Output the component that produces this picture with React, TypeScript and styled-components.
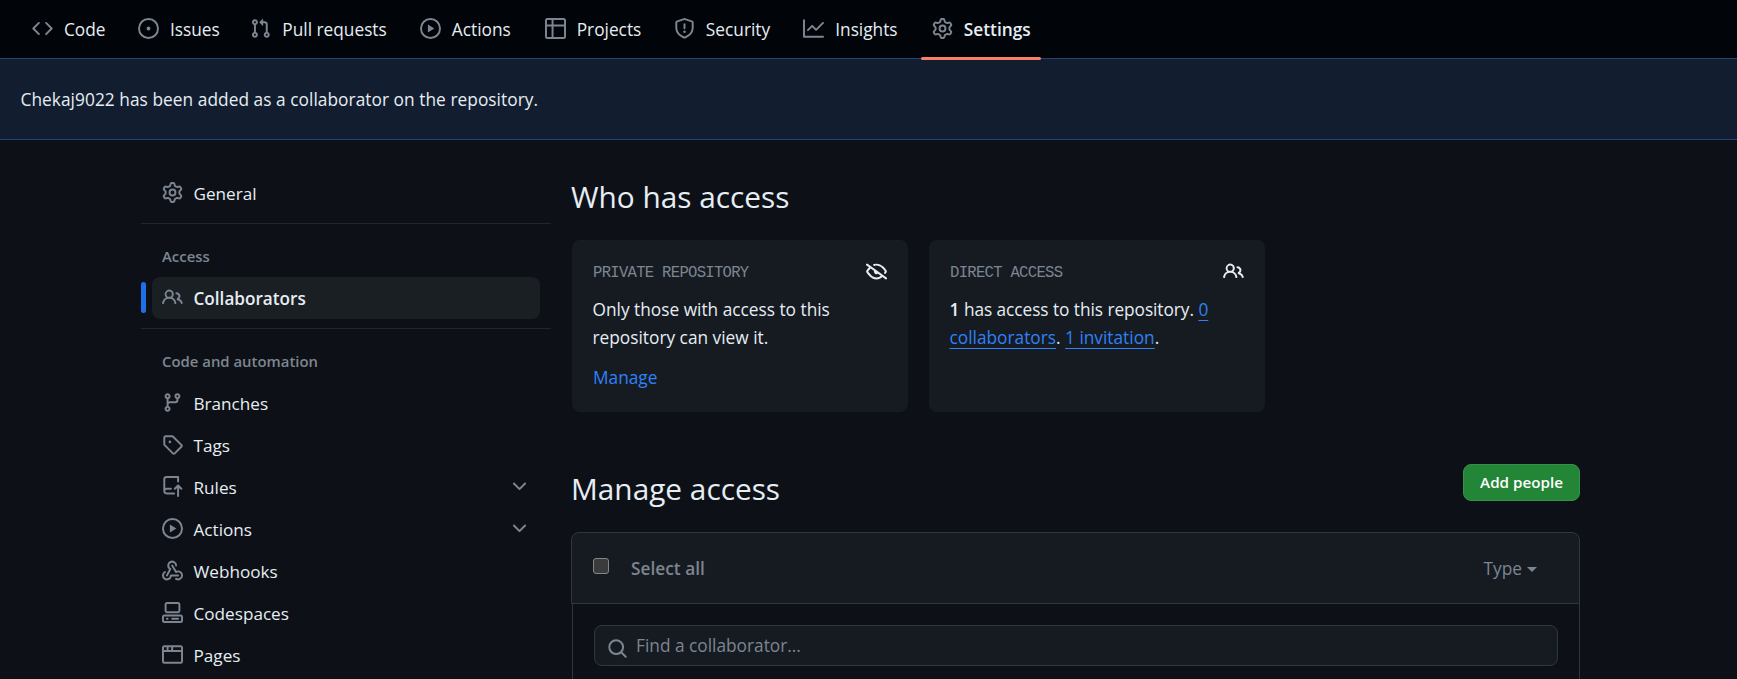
import React from "react";
import styled, { createGlobalStyle } from "styled-components";

const sans = `"Open Sans", "Noto Sans", sans-serif`;

const GlobalStyle = createGlobalStyle`
  *, *::before, *::after { box-sizing: border-box; }
  html, body { margin: 0; background: #0d1117; }
  body {
    color: #e6edf3;
    font-family: ${sans};
    font-size: 17.3px;
    height: 679px;
    overflow: hidden;
  }
  h2, p { margin: 0; font-weight: 400; }
`;

const icons = {
  code: "m11.28 3.22 4.25 4.25a.75.75 0 0 1 0 1.06l-4.25 4.25a.749.749 0 0 1-1.275-.326.749.749 0 0 1 .215-.734L13.94 8l-3.72-3.72a.749.749 0 0 1 .326-1.275.749.749 0 0 1 .734.215Zm-6.56 0a.751.751 0 0 1 1.042.018.751.751 0 0 1 .018 1.042L2.06 8l3.72 3.72a.749.749 0 0 1-.326 1.275.749.749 0 0 1-.734-.215L.47 8.53a.75.75 0 0 1 0-1.06Z",
  issue: "M8 9.5a1.5 1.5 0 1 0 0-3 1.5 1.5 0 0 0 0 3ZM8 0a8 8 0 1 1 0 16A8 8 0 0 1 8 0ZM1.5 8a6.5 6.5 0 1 0 13 0 6.5 6.5 0 0 0-13 0Z",
  pull: "M1.5 3.25a2.25 2.25 0 1 1 3 2.122v5.256a2.251 2.251 0 1 1-1.5 0V5.372A2.25 2.25 0 0 1 1.5 3.25Zm5.677-.177L9.573.677A.25.25 0 0 1 10 .854V2.5h1A2.5 2.5 0 0 1 13.5 5v5.628a2.251 2.251 0 1 1-1.5 0V5a1 1 0 0 0-1-1h-1v1.646a.25.25 0 0 1-.427.177L7.177 3.427a.25.25 0 0 1 0-.354ZM3.75 2.5a.75.75 0 1 0 0 1.5.75.75 0 0 0 0-1.5Zm0 9.5a.75.75 0 1 0 0 1.5.75.75 0 0 0 0-1.5Zm8.25.75a.75.75 0 1 0 1.5 0 .75.75 0 0 0-1.5 0Z",
  play: "M8 0a8 8 0 1 1 0 16A8 8 0 0 1 8 0ZM1.5 8a6.5 6.5 0 1 0 13 0 6.5 6.5 0 0 0-13 0Zm4.879-2.773 4.264 2.559a.25.25 0 0 1 0 .428l-4.264 2.559A.25.25 0 0 1 6 10.559V5.442a.25.25 0 0 1 .379-.215Z",
  table: "M0 1.75C0 .784.784 0 1.75 0h12.5C15.216 0 16 .784 16 1.75v12.5A1.75 1.75 0 0 1 14.25 16H1.75A1.75 1.75 0 0 1 0 14.25ZM6.5 6.5v8h7.75a.25.25 0 0 0 .25-.25V6.5Zm8-1.5V1.75a.25.25 0 0 0-.25-.25H6.5V5Zm-13 1.5v7.75c0 .138.112.25.25.25H5v-8ZM5 5V1.5H1.75a.25.25 0 0 0-.25.25V5Z",
  shield: "M7.467.133a1.748 1.748 0 0 1 1.066 0l5.25 1.68A1.75 1.75 0 0 1 15 3.48V7c0 1.566-.32 3.182-1.303 4.682-.983 1.498-2.585 2.813-5.032 3.855a1.697 1.697 0 0 1-1.33 0c-2.447-1.042-4.049-2.357-5.032-3.855C1.32 10.182 1 8.566 1 7V3.48a1.755 1.755 0 0 1 1.217-1.667Zm.61 1.429a.25.25 0 0 0-.153 0l-5.25 1.68a.25.25 0 0 0-.174.238V7c0 1.358.275 2.666 1.057 3.86.784 1.194 2.121 2.34 4.366 3.297a.196.196 0 0 0 .154 0c2.245-.956 3.582-2.104 4.366-3.298C13.225 9.666 13.5 8.36 13.5 7V3.48a.251.251 0 0 0-.174-.237l-5.25-1.68ZM8.75 4.75v3a.75.75 0 0 1-1.5 0v-3a.75.75 0 0 1 1.5 0ZM9 10.5a1 1 0 1 1-2 0 1 1 0 0 1 2 0Z",
  graph: "M1.5 1.75V13.5h13.75a.75.75 0 0 1 0 1.5H.75a.75.75 0 0 1-.75-.75V1.75a.75.75 0 0 1 1.5 0Zm14.28 2.53-5.25 5.25a.75.75 0 0 1-1.06 0L7 7.06 4.28 9.78a.751.751 0 0 1-1.042-.018.751.751 0 0 1-.018-1.042l3.25-3.25a.75.75 0 0 1 1.06 0L10 7.94l4.72-4.72a.751.751 0 0 1 1.042.018.751.751 0 0 1 .018 1.042Z",
  gear: "M8 0a8.2 8.2 0 0 1 .701.031C9.444.095 9.99.645 10.16 1.29l.288 1.107c.018.066.079.158.212.224.231.114.454.243.668.386.123.082.233.09.299.071l1.103-.303c.644-.176 1.392.021 1.82.63.27.385.506.792.704 1.218.315.675.111 1.422-.364 1.891l-.814.806c-.049.048-.098.147-.088.294.016.257.016.515 0 .772-.01.147.038.246.088.294l.814.806c.475.469.679 1.216.364 1.891a7.977 7.977 0 0 1-.704 1.217c-.428.61-1.176.807-1.82.63l-1.102-.302c-.067-.019-.177-.011-.3.071a5.909 5.909 0 0 1-.668.386c-.133.066-.194.158-.211.224l-.29 1.106c-.168.646-.715 1.196-1.458 1.26a8.006 8.006 0 0 1-1.402 0c-.743-.064-1.289-.614-1.458-1.26l-.289-1.106c-.018-.066-.079-.158-.212-.224a5.738 5.738 0 0 1-.668-.386c-.123-.082-.233-.09-.299-.071l-1.103.303c-.644.176-1.392-.021-1.82-.63a8.12 8.12 0 0 1-.704-1.218c-.315-.675-.111-1.422.363-1.891l.815-.806c.05-.048.098-.147.088-.294a6.214 6.214 0 0 1 0-.772c.01-.147-.038-.246-.088-.294l-.815-.806C.635 6.045.431 5.298.746 4.623a7.92 7.92 0 0 1 .704-1.217c.428-.61 1.176-.807 1.82-.63l1.102.302c.067.019.177.011.3-.071.214-.143.437-.272.668-.386.133-.066.194-.158.211-.224l.29-1.106C6.009.645 6.556.095 7.299.03 7.53.01 7.764 0 8 0Zm-.571 1.525c-.036.003-.108.036-.137.146l-.289 1.105c-.147.561-.549.967-.998 1.189-.173.086-.34.183-.5.29-.417.278-.97.423-1.529.27l-1.103-.303c-.109-.03-.175.016-.195.045-.22.312-.412.644-.573.99-.014.031-.021.11.059.19l.815.806c.411.406.562.957.53 1.456a4.709 4.709 0 0 0 0 .582c.032.499-.119 1.05-.53 1.456l-.815.806c-.081.08-.073.159-.059.19.162.346.353.677.573.989.02.03.085.076.195.046l1.102-.303c.56-.153 1.113-.008 1.53.27.161.107.328.204.501.29.447.222.85.629.997 1.189l.289 1.105c.029.109.101.143.137.146a6.6 6.6 0 0 0 1.142 0c.036-.003.108-.036.137-.146l.289-1.105c.147-.561.549-.967.998-1.189.173-.086.34-.183.5-.29.417-.278.97-.423 1.529-.27l1.103.303c.109.029.175-.016.195-.045.22-.313.411-.644.573-.99.014-.031.021-.11-.059-.19l-.815-.806c-.411-.406-.562-.957-.53-1.456a4.709 4.709 0 0 0 0-.582c-.032-.499.119-1.05.53-1.456l.815-.806c.081-.08.073-.159.059-.19a6.464 6.464 0 0 0-.573-.989c-.02-.03-.085-.076-.195-.046l-1.102.303c-.56.153-1.113.008-1.53-.27a4.44 4.44 0 0 0-.501-.29c-.447-.222-.85-.629-.997-1.189l-.289-1.105c-.029-.11-.101-.143-.137-.146a6.6 6.6 0 0 0-1.142 0ZM11 8a3 3 0 1 1-6 0 3 3 0 0 1 6 0ZM9.5 8a1.5 1.5 0 1 0-3.001.001A1.5 1.5 0 0 0 9.5 8Z",
  people: "M2 5.5a3.5 3.5 0 1 1 5.898 2.549 5.508 5.508 0 0 1 3.034 4.084.75.75 0 1 1-1.482.235 4 4 0 0 0-7.9 0 .75.75 0 0 1-1.482-.236A5.507 5.507 0 0 1 3.102 8.05 3.493 3.493 0 0 1 2 5.5ZM11 4a3.001 3.001 0 0 1 2.22 5.018 5.01 5.01 0 0 1 2.56 3.012.749.749 0 0 1-.885.954.752.752 0 0 1-.549-.514 3.507 3.507 0 0 0-2.522-2.372.75.75 0 0 1-.574-.73v-.352a.75.75 0 0 1 .416-.672A1.5 1.5 0 0 0 11 5.5.75.75 0 0 1 11 4Zm-5.5-.5a2 2 0 1 0-.001 3.999A2 2 0 0 0 5.5 3.5Z",
  branch: "M9.5 3.25a2.25 2.25 0 1 1 3 2.122V6A2.5 2.5 0 0 1 10 8.5H6a1 1 0 0 0-1 1v1.128a2.251 2.251 0 1 1-1.5 0V5.372a2.25 2.25 0 1 1 1.5 0v1.836A2.493 2.493 0 0 1 6 7h4a1 1 0 0 0 1-1v-.628A2.25 2.25 0 0 1 9.5 3.25Zm-6 0a.75.75 0 1 0 1.5 0 .75.75 0 0 0-1.5 0Zm8.25-.75a.75.75 0 1 0 0 1.5.75.75 0 0 0 0-1.5ZM4.25 12a.75.75 0 1 0 0 1.5.75.75 0 0 0 0-1.5Z",
  tag: "M1 7.775V2.75C1 1.784 1.784 1 2.75 1h5.025c.464 0 .91.184 1.238.513l6.25 6.25a1.75 1.75 0 0 1 0 2.474l-5.026 5.026a1.75 1.75 0 0 1-2.474 0l-6.25-6.25A1.752 1.752 0 0 1 1 7.775Zm1.5 0c0 .066.026.13.073.177l6.25 6.25a.25.25 0 0 0 .354 0l5.025-5.025a.25.25 0 0 0 0-.354l-6.25-6.25a.25.25 0 0 0-.177-.073H2.75a.25.25 0 0 0-.25.25ZM6 5a1 1 0 1 1 0 2 1 1 0 0 1 0-2Z",
  push: "M1 2.5A2.5 2.5 0 0 1 3.5 0h8.75a.75.75 0 0 1 .75.75v3.5a.75.75 0 0 1-1.5 0V1.5h-8a1 1 0 0 0-1 1v6.708A2.493 2.493 0 0 1 3.5 9h3.25a.75.75 0 0 1 0 1.5H3.5a1 1 0 0 0 0 2h5.75a.75.75 0 0 1 0 1.5H3.5A2.5 2.5 0 0 1 1 11.5Zm13.23 7.79h-.001l-1.224-1.224v6.184a.75.75 0 0 1-1.5 0V9.066L10.28 10.29a.75.75 0 0 1-1.06-1.061l2.505-2.504a.75.75 0 0 1 1.06 0L15.29 9.23a.751.751 0 0 1-.018 1.042.751.751 0 0 1-1.042.018Z",
  webhook: "M5.5 4.25a2.25 2.25 0 0 1 4.5 0 .75.75 0 0 0 1.5 0 3.75 3.75 0 1 0-6.14 2.889l-2.272 4.258a.75.75 0 0 0 1.324.706L7 7.25a.75.75 0 0 0-.309-1.015A2.25 2.25 0 0 1 5.5 4.25Z|M7.364 3.607a.75.75 0 0 1 1.03.257l2.608 4.349a3.75 3.75 0 1 1-.628 6.785.75.75 0 0 1 .752-1.299 2.25 2.25 0 1 0-.033-3.88.75.75 0 0 1-1.03-.256L7.107 4.636a.75.75 0 0 1 .257-1.03Z|M2.9 8.776A.75.75 0 0 1 2.625 9.8 2.25 2.25 0 1 0 6 11.75a.75.75 0 0 1 .75-.751h5.5a.75.75 0 0 1 0 1.5H7.425a3.751 3.751 0 1 1-5.55-3.998.75.75 0 0 1 1.024.274Z",
  codespaces: "M0 11.25c0-.966.784-1.75 1.75-1.75h12.5c.966 0 1.75.784 1.75 1.75v3A1.75 1.75 0 0 1 14.25 16H1.75A1.75 1.75 0 0 1 0 14.25Zm2-9.5C2 .784 2.784 0 3.75 0h8.5C13.216 0 14 .784 14 1.75v5a1.75 1.75 0 0 1-1.75 1.75h-8.5A1.75 1.75 0 0 1 2 6.75Zm1.75-.25a.25.25 0 0 0-.25.25v5c0 .138.112.25.25.25h8.5a.25.25 0 0 0 .25-.25v-5a.25.25 0 0 0-.25-.25Zm-2 9.5a.25.25 0 0 0-.25.25v3c0 .138.112.25.25.25h12.5a.25.25 0 0 0 .25-.25v-3a.25.25 0 0 0-.25-.25Z|M7 12.75a.75.75 0 0 1 .75-.75h4.5a.75.75 0 0 1 0 1.5h-4.5a.75.75 0 0 1-.75-.75Zm-4 0a.75.75 0 0 1 .75-.75h.5a.75.75 0 0 1 0 1.5h-.5a.75.75 0 0 1-.75-.75Z",
  browser: "M0 2.75C0 1.784.784 1 1.75 1h12.5c.966 0 1.75.784 1.75 1.75v10.5A1.75 1.75 0 0 1 14.25 15H1.75A1.75 1.75 0 0 1 0 13.25ZM14.5 6h-13v7.25c0 .138.112.25.25.25h12.5a.25.25 0 0 0 .25-.25Zm-6-3.5v2h6V2.75a.25.25 0 0 0-.25-.25ZM5 2.5v2h2v-2Zm-3.25 0a.25.25 0 0 0-.25.25V4.5h2v-2Z",
  chevron: "M12.78 5.22a.749.749 0 0 1 0 1.06l-4.25 4.25a.749.749 0 0 1-1.06 0L3.22 6.28a.749.749 0 1 1 1.06-1.06L8 8.939l3.72-3.719a.749.749 0 0 1 1.06 0Z",
  eyeClosed: "M.143 2.31a.75.75 0 0 1 1.047-.167l14.5 10.5a.75.75 0 1 1-.88 1.214l-2.248-1.628C11.346 13.19 9.792 14 8 14c-1.981 0-3.67-.992-4.933-2.078C1.797 10.832.88 9.577.43 8.9a1.619 1.619 0 0 1 0-1.797c.353-.533.995-1.42 1.868-2.305L.31 3.357A.75.75 0 0 1 .143 2.31Zm1.536 5.622A.12.12 0 0 0 1.657 8c0 .021.006.045.022.068.412.621 1.242 1.75 2.366 2.717C5.175 11.758 6.527 12.5 8 12.5c1.195 0 2.31-.488 3.29-1.191L9.063 9.695A2 2 0 0 1 6.058 7.52L3.529 5.688a14.207 14.207 0 0 0-1.85 2.244ZM8 3.5c-.516 0-1.017.09-1.499.251a.75.75 0 1 1-.473-1.423A6.207 6.207 0 0 1 8 2c1.981 0 3.67.992 4.933 2.078 1.27 1.091 2.187 2.345 2.637 3.023a1.62 1.62 0 0 1 0 1.798c-.11.166-.248.365-.41.587a.75.75 0 1 1-1.21-.887c.148-.201.272-.382.371-.53a.119.119 0 0 0 0-.137c-.412-.621-1.242-1.75-2.366-2.717C10.825 4.242 9.473 3.5 8 3.5Z",
  search: "M10.68 11.74a6 6 0 0 1-7.922-8.982 6 6 0 0 1 8.982 7.922l3.04 3.04a.749.749 0 0 1-.326 1.275.749.749 0 0 1-.734-.215ZM11.5 7a4.499 4.499 0 1 0-8.997 0A4.499 4.499 0 0 0 11.5 7Z",
};

type IconName = keyof typeof icons;

const Svg = styled.svg<{ $bright?: boolean }>`
  display: block;
  flex: none;
  width: 21px;
  height: 21px;
  fill: ${(p) => (p.$bright ? "#e6edf3" : "#7d8590")};
`;

const Icon = ({ name, bright }: { name: IconName; bright?: boolean }) => (
  <Svg viewBox="0 0 16 16" $bright={bright} aria-hidden="true">
    {icons[name].split("|").map((d) => (
      <path key={d} d={d} />
    ))}
  </Svg>
);

const RepoNav = styled.nav`
  display: flex;
  gap: 10.4px;
  height: 58px;
  padding-left: 21.4px;
  background: #010409;
`;

const NavTab = styled.a<{ $active?: boolean }>`
  position: relative;
  display: flex;
  align-items: center;
  gap: 11.2px;
  height: 57px;
  padding: 0 9.4px 0 10.4px;
  font-weight: ${(p) => (p.$active ? 600 : 400)};
  white-space: nowrap;

  &::after {
    content: "";
    display: ${(p) => (p.$active ? "block" : "none")};
    position: absolute;
    left: 0;
    right: 0;
    top: 57px;
    height: 3px;
    border-radius: 2px;
    background: #f78166;
  }
`;

const TabLabel = styled.span<{ $width: number }>`
  width: ${(p) => p.$width}px;
  padding-top: 1px;
`;

const Flash = styled.div`
  display: flex;
  align-items: center;
  height: 82px;
  padding: 1px 20.5px 0;
  border-top: 1px solid #1e4479;
  border-bottom: 1px solid #1e4479;
  background: #121d2f;
  letter-spacing: 0.05px;
`;

const Page = styled.div`
  display: grid;
  grid-template-columns: 410px 1008px;
  column-gap: 21px;
  padding: 32px 0 0 141px;
`;

const Divider = styled.div`
  height: 1px;
  margin-top: 9px;
  background: #21262d;
`;

const GroupTitle = styled.div`
  height: 53px;
  padding: 11.6px 21px 0;
  line-height: 41.4px;
  font-size: 14.9px;
  font-weight: 600;
  color: #7d8590;
`;

const SideItem = styled.a<{ $active?: boolean }>`
  position: relative;
  display: flex;
  align-items: center;
  gap: 10.5px;
  height: 42px;
  margin: 0 11px;
  padding: 0 10px;
  border-radius: 8px;
  background: ${(p) => (p.$active ? "#1a1f24" : "transparent")};
  font-weight: ${(p) => (p.$active ? 600 : 400)};

  svg { margin-bottom: 1px; }

  &::before {
    content: "";
    display: ${(p) => (p.$active ? "block" : "none")};
    position: absolute;
    left: -11px;
    top: 5px;
    width: 5px;
    height: 31px;
    border-radius: 3px;
    background: #1f6feb;
  }
`;

const SideLabel = styled.span`
  flex: 1;
  padding-top: 1px;
  font-size: 17.15px;
`;

const Heading = styled.h2`
  height: 48px;
  margin-left: -1px;
  padding-top: 1px;
  line-height: 48px;
  font-size: 29.8px;
`;

const Cards = styled.div`
  display: flex;
  gap: 21px;
  margin-top: 20px;
`;

const Card = styled.section`
  width: 336px;
  height: 172px;
  padding: 21px;
  border-radius: 8px;
  background: #161b22;
`;

const CardHead = styled.header`
  display: flex;
  justify-content: space-between;
  height: 21px;
  margin-bottom: 14px;
`;

const CardLabel = styled.span`
  padding-top: 2px;
  font: 15.6px/21px "Liberation Mono", monospace;
  letter-spacing: -0.72px;
  color: #7d8590;
`;

const CardText = styled.p`
  margin-left: -0.5px;
  line-height: 28.3px;
`;

const Strong = styled.strong`
  font-weight: 600;
`;

const Compact = styled.span`
  letter-spacing: -0.06px;
`;

const Link = styled.a<{ $underlined?: boolean }>`
  color: #2f81f7;
  text-decoration: ${(p) => (p.$underlined ? "underline" : "none")};
  text-decoration-thickness: 1px;
  text-underline-offset: 4px;
  text-decoration-skip-ink: none;
`;

const ManageLine = styled.p`
  margin-top: 11.5px;
  line-height: 28.3px;
`;

const ManageHead = styled.div`
  display: flex;
  justify-content: space-between;
  align-items: flex-start;
  height: 49px;
  margin: 52px 0 19px;
`;

const AddButton = styled.button`
  width: 117px;
  height: 37px;
  padding: 0 0 2px;
  border: 1px solid #379249;
  border-radius: 8px;
  background: #238636;
  color: #fff;
  font: 600 15.2px ${sans};
`;

const ListHead = styled.div`
  display: flex;
  align-items: center;
  height: 72px;
  margin-left: -1px;
  padding: 0 42px 0 21px;
  border: 1px solid #30363d;
  border-radius: 8px 8px 0 0;
  background: #161b22;
  color: #7d8590;
`;

const Checkbox = styled.span`
  width: 16px;
  height: 16px;
  margin: 0 22px 4px 0;
  border: 1px solid #858585;
  border-radius: 3px;
  background: #3b3b3b;
`;

const SelectAll = styled.span`
  flex: 1;
  font-weight: 600;
`;

const TypeMenu = styled.span`
  display: flex;
  align-items: center;
  gap: 5px;

  &::after {
    content: "";
    margin-top: 3px;
    border: 5px solid transparent;
    border-top-color: #7d8590;
    border-bottom: 0;
  }
`;

const ListBody = styled.div`
  height: 75px;
  padding: 21px 21px 0;
  border: solid #30363d;
  border-width: 0 1px;
`;

const SearchField = styled.div`
  display: flex;
  align-items: center;
  gap: 8px;
  height: 41px;
  padding: 0 12px;
  border: 1px solid #30363d;
  border-radius: 8px;
  background: #161b22;
  color: #7d8590;

  svg { margin-top: 5px; }
`;

const tabs: { icon: IconName; label: string; width: number; active?: boolean }[] = [
  { icon: "code", label: "Code", width: 43.6 },
  { icon: "issue", label: "Issues", width: 50 },
  { icon: "pull", label: "Pull requests", width: 107.2 },
  { icon: "play", label: "Actions", width: 62.5 },
  { icon: "table", label: "Projects", width: 66.8 },
  { icon: "shield", label: "Security", width: 67 },
  { icon: "graph", label: "Insights", width: 66.2 },
  { icon: "gear", label: "Settings", width: 68, active: true },
];

const automation: { icon: IconName; label: string; expandable?: boolean }[] = [
  { icon: "branch", label: "Branches" },
  { icon: "tag", label: "Tags" },
  { icon: "push", label: "Rules", expandable: true },
  { icon: "play", label: "Actions", expandable: true },
  { icon: "webhook", label: "Webhooks" },
  { icon: "codespaces", label: "Codespaces" },
  { icon: "browser", label: "Pages" },
];

export default function App() {
  return (
    <>
      <GlobalStyle />
      <RepoNav>
        {tabs.map((t) => (
          <NavTab key={t.label} $active={t.active}>
            <Icon name={t.icon} />
            <TabLabel $width={t.width}>{t.label}</TabLabel>
          </NavTab>
        ))}
      </RepoNav>
      <Flash>Chekaj9022 has been added as a collaborator on the repository.</Flash>
      <Page>
        <aside>
          <SideItem>
            <Icon name="gear" />
            <SideLabel>General</SideLabel>
          </SideItem>
          <Divider />
          <GroupTitle>Access</GroupTitle>
          <SideItem $active>
            <Icon name="people" />
            <SideLabel>Collaborators</SideLabel>
          </SideItem>
          <Divider />
          <GroupTitle>Code and automation</GroupTitle>
          {automation.map((item) => (
            <SideItem key={item.label}>
              <Icon name={item.icon} />
              <SideLabel>{item.label}</SideLabel>
              {item.expandable && <Icon name="chevron" />}
            </SideItem>
          ))}
        </aside>
        <main>
          <Heading>Who has access</Heading>
          <Cards>
            <Card>
              <CardHead>
                <CardLabel>PRIVATE REPOSITORY</CardLabel>
                <Icon name="eyeClosed" bright />
              </CardHead>
              <CardText>Only those with access to this repository can view it.</CardText>
              <ManageLine>
                <Link>Manage</Link>
              </ManageLine>
            </Card>
            <Card>
              <CardHead>
                <CardLabel>DIRECT ACCESS</CardLabel>
                <Icon name="people" bright />
              </CardHead>
              <CardText>
                <Strong>1</Strong> <Compact>has access to this repository.</Compact>{" "}
                <Link $underlined>0 collaborators</Link>. <Link $underlined>1 invitation</Link>.
              </CardText>
            </Card>
          </Cards>
          <ManageHead>
            <Heading>Manage access</Heading>
            <AddButton>Add people</AddButton>
          </ManageHead>
          <ListHead>
            <Checkbox />
            <SelectAll>Select all</SelectAll>
            <TypeMenu>Type</TypeMenu>
          </ListHead>
          <ListBody>
            <SearchField>
              <Icon name="search" />
              Find a collaborator...
            </SearchField>
          </ListBody>
        </main>
      </Page>
    </>
  );
}
